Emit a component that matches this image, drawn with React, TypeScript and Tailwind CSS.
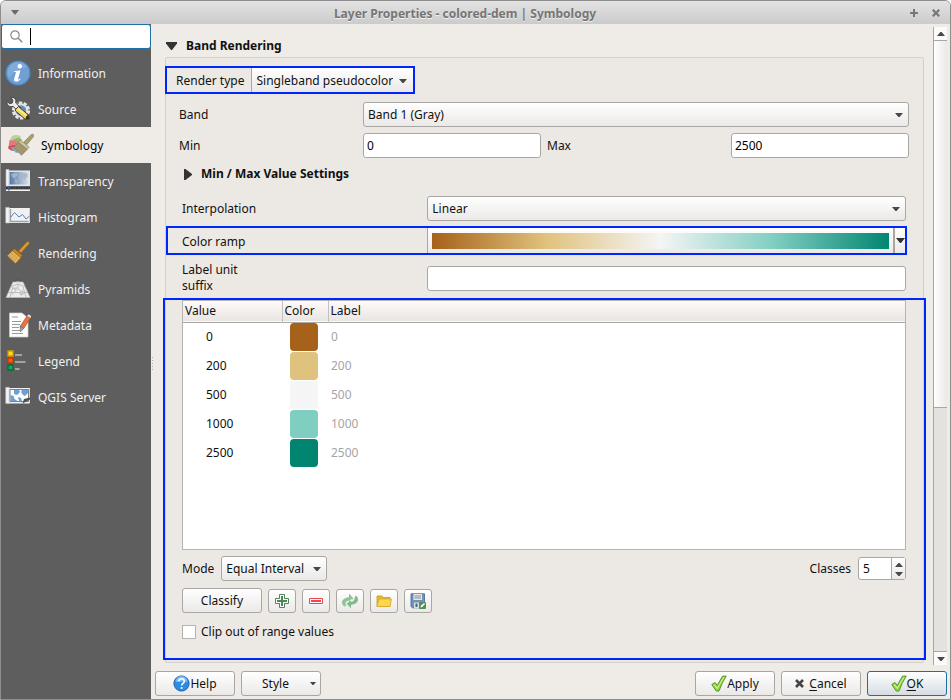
import React, { ReactNode, useState } from "react";

const raised = "border border-[#a9a7a4] rounded-[3px] bg-linear-to-b from-[#ffffff] to-[#ebe9e7]";
const field = "h-[25px] w-full min-w-0 rounded-[3px] border border-[#a9a7a4] bg-white px-[3px] text-[12px] leading-4 text-black outline-none";

function Down({ className = "" }: { className?: string }) {
  return (
    <svg width="8" height="4" viewBox="0 0 8 4" className={className} aria-hidden="true">
      <path d="M0 0h8L4.6 4H3.4z" fill="#484848" />
    </svg>
  );
}

function Up({ className = "" }: { className?: string }) {
  return (
    <svg width="8" height="4" viewBox="0 0 8 4" className={className} aria-hidden="true">
      <path d="M0 4h8L4.6 0H3.4z" fill="#484848" />
    </svg>
  );
}

function Combo({ id, label, options, flat = false }: { id: string; label?: string; options: string[]; flat?: boolean }) {
  return (
    <div className="relative min-w-0">
      <select
        id={id}
        aria-label={label}
        className={
          flat
            ? "block h-6 w-full appearance-none border-l border-[#a9a7a4] bg-linear-to-b from-[#ffffff] to-[#ebe9e7] pt-0.5 pr-5 pl-1 text-[12px] leading-4 outline-none"
            : `${raised} block h-[25px] w-full appearance-none pr-[22px] pl-1 text-[12px] leading-4 outline-none`
        }
      >
        {options.map((o) => (
          <option key={o}>{o}</option>
        ))}
      </select>
      <Down className="pointer-events-none absolute top-[11px] right-1.5" />
    </div>
  );
}

/* ---------- sidebar icons ---------- */

function InfoIcon() {
  return (
    <svg width="26" height="26" viewBox="0 0 26 26">
      <circle cx="13" cy="13" r="12" fill="#6f9fd3" stroke="#4a86c4" strokeWidth="1.2" />
      <path d="M2.5 12A10.5 10.5 0 0 1 22 7.500Q11 8 4 18Q2.500 15 2.500 12z" fill="#8fb5de" opacity=".55" />
      <circle cx="14.800" cy="6.300" r="2.200" fill="#fff" />
      <path d="M9 11.200l6.500-.9-2.400 8.500c-.2.900.5.900 1.800-.3l.7.600c-1.700 2-3.300 2.700-4.800 2.500-1.600-.2-2-1.300-1.600-2.800l1.700-6c.2-.7-.3-.8-1.900-.7z" fill="#fff" />
    </svg>
  );
}

function SourceIcon() {
  return (
    <svg width="26" height="26" viewBox="0 0 26 26">
      <circle cx="16" cy="14.500" r="7.800" fill="none" stroke="#e6e6e6" strokeWidth="2.600" strokeDasharray="3.400 1.500" />
      <circle cx="16" cy="14.500" r="6.200" fill="#5a8fca" stroke="#e2e2e2" strokeWidth="2" />
      <path d="M6 1.500c3.500-.6 5.500 2 4.700 5.500l5.300 5-2.800 3-5.200-4.700C4.500 11.500 1.500 9 2 5.500l2.700 2.300 2.600-.8.600-2.700z" fill="#eeeeec" stroke="#3f3f3f" strokeWidth=".9" />
      <path d="M10.500 13.500l3-3 9.500 8 1.200 4.500-4.200.2-9.500-8.200z" fill="#f0d160" stroke="#353019" strokeWidth=".9" />
      <path d="M12.800 12.500l8.700 7.500" stroke="#fff0a0" strokeWidth="1.300" />
      <path d="M20.500 23l.8-3 2-1 1 4z" fill="#3a3420" />
    </svg>
  );
}

function SymbologyIcon() {
  return (
    <svg width="26" height="26" viewBox="0 0 26 26">
      <path d="M3.500 4.500Q7.500 1.800 13 4.200L10.500 10 2 8.500z" fill="#bcd29a" />
      <path d="M5 7.500l5.500-2 3.500 2-3 6-5-1z" fill="#93b76c" />
      <path d="M1.500 8l7.500 1 .5 6-9 .5z" fill="#e8757c" />
      <path d="M.3 14.500l6-1.500 3 5Q4 20.500.3 16.500z" fill="#d04a52" />
      <path d="M2.500 15.500l6-1 4 5.500-4.500 1z" fill="#88a8d8" />
      <path d="M15.500 10.500l7.300-7.500q1.500-1.300 2.700-.3.800 1-.3 2.200L18.500 13z" fill="#aaa070" stroke="#7d754f" strokeWidth=".6" />
      <path d="M12.500 8l8.700 7-2 2.500-8.700-7z" fill="#c9c2a4" stroke="#8b8460" strokeWidth=".6" />
      <path d="M10.500 10.500l8.700 7-5.700 5.700-7.700-7.500z" fill="#a79b70" stroke="#7c7150" strokeWidth=".6" />
      <path d="M12 12.500l-4 4.200M14 14l-4 4.700M16 15.500l-4 5M18 17.300l-4.500 4.700" stroke="#8a7f5a" strokeWidth=".6" />
    </svg>
  );
}

function TransparencyIcon() {
  return (
    <svg width="26" height="26" viewBox="0 0 26 26">
      <defs>
        <linearGradient id="sky" x1="0" x2="1">
          <stop offset="0" stopColor="#5578a8" />
          <stop offset="1" stopColor="#d5e0ee" />
        </linearGradient>
      </defs>
      <path d="M4 2.500h21V18H3.500z" fill="#e4e7ea" />
      <path d="M4.500 4h19v12.500H4.500z" fill="url(#sky)" />
      <path d="M6 6l5-1 2 1.500-2 2-1 2-3-1.500zM10 11l2.500 1-1 4-1.500-2zM15 6l7-.5 1 3-2 1-1 3-2-3-1 5-2-4-1-1z" fill="#a9b7c6" opacity=".9" />
      <path d="M1 1.500h3v16.500H1z" fill="#f2f2f2" stroke="#bcbcbc" strokeWidth=".6" />
      <path d="M1 20h24" stroke="#34383c" strokeWidth="2" strokeDasharray="2 .5" />
      <path d="M1 22.300h24" stroke="#f5f5f5" strokeWidth="1.500" />
      <path d="M4 18.500v4" stroke="#2e5fa0" strokeWidth="1.500" />
    </svg>
  );
}

function HistogramIcon() {
  return (
    <svg width="26" height="26" viewBox="0 0 26 26">
      <path d="M4 4h20.800v15H4z" fill="#f1f1f1" />
      <path d="M.8 3.400h3.400v15.500H.8z" fill="#f5f5f5" stroke="#c4c4c4" strokeWidth=".7" />
      <path d="M5.500 5v12.500h18" stroke="#9aa3aa" fill="none" strokeWidth="1.300" />
      <path d="M5.500 13.500l4-5 4.500 4.500 3.500-2.500 3.500 4.500 3.500-3" stroke="#5b82b5" fill="none" strokeWidth="1" />
    </svg>
  );
}

function RenderingIcon() {
  return (
    <svg width="26" height="26" viewBox="0 0 26 26">
      <path d="M13.500 11l8.300-9q1.300-.9 2.300 0 .8 1-.2 2.200L16 13z" fill="#d99b38" stroke="#8d5f18" strokeWidth=".7" />
      <path d="M9.500 8.500l8 7-2 2.300-8.200-7z" fill="#cb872a" stroke="#805413" strokeWidth=".7" />
      <path d="M7.600 10.700l8.200 7L10.500 23.500 2.200 15.800z" fill="#e5b868" stroke="#9a6b22" strokeWidth=".8" />
      <path d="M9.500 12.300L4 17.500M11.500 14L6 19.500M13.500 15.700l-5.500 5.800M5.500 12.800l8 7M4 15l7.500 7" stroke="#bd8b3b" strokeWidth=".5" />
    </svg>
  );
}

function PyramidsIcon() {
  return (
    <svg width="26" height="26" viewBox="0 0 26 26">
      <path d="M9.500 7q0-3 3.500-3t3.500 3z" fill="#8c8c8c" stroke="#3b3b3b" strokeWidth=".7" />
      <path d="M8 6h10l7 15.500H1z" fill="#ececec" stroke="#b9b9b9" strokeWidth=".7" />
      <path d="M5.500 11L13 8l7.500 3M3 16.500h19M8 11L5 21M18 11l3 10M7 12l4 2-2 3M13 8v5l4 3" stroke="#b0b0b0" fill="none" strokeWidth=".8" />
      <path d="M8.500 12l3-1 1 2-2 2zM14 17l4-3 1 4-3 2zM5 18l3-1 1 2z" fill="#c9c9c9" />
    </svg>
  );
}

function MetadataIcon() {
  return (
    <svg width="26" height="26" viewBox="0 0 26 26">
      <path d="M4.500 1h12.500l6 5v19H4.500z" fill="#fcfcfc" stroke="#cfcfcf" strokeWidth=".7" />
      <path d="M7 5h6M7 9.500h9M7 12.500h8M7 15.500h7M7 18.500h8M7 21.500h11" stroke="#9a9a9a" strokeWidth="1" />
      <path d="M22 4l3.500 2-6.800 10.500-3.600-2.200z" fill="#e57440" stroke="#aa4b20" strokeWidth=".6" />
      <path d="M22 4l1.200-1.500q2-.2 3 2L25.500 6z" fill="#e4dcd8" />
      <path d="M15.100 14.300l3.600 2.200-3.200 3.300z" fill="#8fa0a8" stroke="#59656b" strokeWidth=".6" />
    </svg>
  );
}

function LegendIcon() {
  return (
    <svg width="26" height="26" viewBox="0 0 26 26">
      <path d="M3 3h5v5H3z" fill="#ffdc22" stroke="#e09a00" strokeWidth="1.300" />
      <path d="M3 10h5v5H3z" fill="#ff5a0a" stroke="#c83600" strokeWidth="1.300" />
      <path d="M3 17h5v5H3z" fill="#18a558" stroke="#0a6b3e" strokeWidth="1.300" />
      <path d="M10 7h7M10 14h10.500M10 21h4.500" stroke="#a3a3a3" strokeWidth="1.800" />
    </svg>
  );
}

function ServerIcon() {
  return (
    <svg width="26" height="26" viewBox="0 0 26 26">
      <path d="M4 4h20.800v15.500H3.500z" fill="#f2f2f2" />
      <path d="M.8 3.400h3.400v16H.8z" fill="#f5f5f5" stroke="#c4c4c4" strokeWidth=".7" />
      <path d="M5 5.500h18.500v12H5z" fill="#fdfdfd" stroke="#6f7478" strokeWidth=".9" />
      <path d="M9 6h5l1 2-3 3-3-1zM17 6h6v3l-3 3-2-1-2-3zM5.500 11l3 1 1 3 3 2h-7zM13 13l3 1 1 3h-3z" fill="#6d9fd4" />
      <path d="M17.500 19.500l1.500-4.500 6-1.500v2z" fill="#4d4d4d" />
    </svg>
  );
}

const pages: { name: string; icon: ReactNode }[] = [
  { name: "Information", icon: <InfoIcon /> },
  { name: "Source", icon: <SourceIcon /> },
  { name: "Symbology", icon: <SymbologyIcon /> },
  { name: "Transparency", icon: <TransparencyIcon /> },
  { name: "Histogram", icon: <HistogramIcon /> },
  { name: "Rendering", icon: <RenderingIcon /> },
  { name: "Pyramids", icon: <PyramidsIcon /> },
  { name: "Metadata", icon: <MetadataIcon /> },
  { name: "Legend", icon: <LegendIcon /> },
  { name: "QGIS Server", icon: <ServerIcon /> },
];

/* ---------- toolbar icons ---------- */

const AddIcon = (
  <svg width="16" height="16" viewBox="0 0 16 16">
    <path d="M5.500 1.500h5v4h4v5h-4v4h-5v-4h-4v-5h4z" fill="#fff" stroke="#4d8757" />
    <path d="M7 3h2v4h4v2H9v4H7V9H3V7h4z" fill="#4d8757" />
  </svg>
);
const RemoveIcon = (
  <svg width="16" height="16" viewBox="0 0 16 16">
    <path d="M1.500 5.500h13v5h-13z" fill="#fff" stroke="#ec4a50" />
    <path d="M3 7h10v2H3z" fill="#ec4a50" />
  </svg>
);
const RefreshIcon = (
  <svg width="18" height="18" viewBox="0 0 18 18">
    <path d="M3.500 14.500Q.5 12.500 1 9.500 2 6 8 5V1.500L12.500 6.500 8 11V8.500Q4.500 9 4.500 11.500 4.500 12.500 5.500 13.500z" fill="#8fc497" />
    <path d="M14.500 3.500Q17.500 5.500 17 8.500 16 12 10 13v3.500L5.500 11.500 10 8.500v1.500Q13.500 9 13.500 6.500z" fill="#83ba8c" />
    <path d="M8.500 8.500l3-2 -1 3z" fill="#f1f0ee" />
  </svg>
);
const FolderIcon = (
  <svg width="16" height="16" viewBox="0 0 16 16">
    <path d="M1 13.500V3h5l1 1.500h7V13.500z" fill="#e5b92f" stroke="#c69b22" strokeWidth=".8" />
    <path d="M3 6h12.500l-1.500 7.500H1z" fill="#fcd651" stroke="#d8aa2a" strokeWidth=".8" />
  </svg>
);
const SaveIcon = (
  <svg width="16" height="16" viewBox="0 0 16 16">
    <path d="M1 .8h13.500v14H2.500L1 13.500z" fill="#6d93be" stroke="#4e7095" strokeWidth=".9" />
    <path d="M3.500 1h8.500v6H3.500z" fill="#e6e6e6" />
    <path d="M4.500 3h6.500M4.500 5h6.500" stroke="#8d8d8d" />
    <path d="M4 9.500h8V15H4z" fill="#dedede" />
    <path d="M5.500 10.500h2V14h-2z" fill="#4a6485" />
    <rect x="9" y="9" width="7" height="7" rx="1" fill="#4f9057" />
    <path d="M10.500 14.500l.5-2 3-2.500 1 1-2.700 3z" fill="#fff" />
  </svg>
);

function Check() {
  return (
    <svg width="16" height="17" viewBox="0 0 16 17" aria-hidden="true">
      <path d="M.8 9.500l3.200-2L6.200 10.500 11.500 1.200 15.200 1Q10.800 8 8 16H5.200z" fill="#8fd33f" stroke="#4c8f22" strokeWidth=".9" strokeLinejoin="round" />
      <path d="M2.800 9.500l3.500 3.700L13 2.300" stroke="#c6f08a" fill="none" strokeWidth="1.200" />
    </svg>
  );
}

const stops = [
  { value: "0", swatch: "bg-[#a6611a]" },
  { value: "200", swatch: "bg-[#dfc27d]" },
  { value: "500", swatch: "bg-[#f5f5f5]" },
  { value: "1000", swatch: "bg-[#80cdc1]" },
  { value: "2500", swatch: "bg-[#018571]" },
];

const tools = [
  { name: "Add value", icon: AddIcon },
  { name: "Remove value", icon: RemoveIcon },
  { name: "Reload from band", icon: RefreshIcon },
  { name: "Load color map", icon: FolderIcon },
  { name: "Save color map", icon: SaveIcon },
];

const dialogButton = `${raised} flex h-[25px] w-20 items-center justify-center`;

function TitleBar() {
  return (
    <header className="flex h-[23px] items-center bg-linear-to-b from-[#e3e3e3] to-[#cbcbcb] pr-[10px] pl-[9px]">
      <button aria-label="Window menu" className="w-[10px]">
        <svg width="8" height="5" viewBox="0 0 8 5" className="mx-auto"><path d="M0 0h8L4.500 4.500h-1z" fill="#6a6a6a" /></svg>
      </button>
      <h1 className="flex-1 pt-0.5 text-center text-[12px] leading-4 font-bold text-[#757575] [text-shadow:0_1px_0_#f0f0f0]">
        Layer Properties - colored-dem | Symbology
      </h1>
      <div className="flex gap-[14px]">
        <button aria-label="Maximize">
          <svg width="8" height="8" viewBox="0 0 8 8"><path d="M4 0v8M0 4h8" stroke="#777" strokeWidth="2" /></svg>
        </button>
        <button aria-label="Close">
          <svg width="8" height="8" viewBox="0 0 8 8"><path d="M.7.7l6.600 6.600M7.300.7L.7 7.300" stroke="#777" strokeWidth="2.200" /></svg>
        </button>
      </div>
    </header>
  );
}

function Sidebar() {
  const [page, setPage] = useState("Symbology");
  return (
    <aside className="w-[150px] shrink-0 bg-[#5e5e5e]">
      <div className="flex h-[25px] items-center rounded-[3px] border border-[#1c72a8] bg-white pl-2">
        <svg width="13" height="13" viewBox="0 0 13 13" aria-hidden="true">
          <circle cx="5" cy="5" r="4.200" fill="none" stroke="#8b8b8b" strokeWidth="1.200" />
          <path d="M8.200 8.200L12.300 12.300" stroke="#8b8b8b" strokeWidth="1.600" />
        </svg>
        <div className="ml-[7px] h-[17px] w-px bg-black" />
        <input aria-label="Search" className="h-full w-full min-w-0 flex-1 bg-transparent text-[12px] outline-none" />
      </div>
      <nav className="mt-1.5 flex flex-col">
        {pages.map(({ name, icon }) => (
          <button
            key={name}
            onClick={() => setPage(name)}
            aria-current={page === name}
            className={
              page === name
                ? "flex h-9 items-center gap-[7px] bg-[#efebe7] pl-[7px] text-black"
                : "flex h-9 items-center gap-[7px] pl-1 text-[#f0f0f0]"
            }
          >
            {icon}
            <span className="pt-0.5">{name}</span>
          </button>
        ))}
      </nav>
    </aside>
  );
}

function ColorTable() {
  return (
    <div className="min-h-[180px] flex-1 border border-[#b5b3b0] bg-white">
      <table className="w-full table-fixed border-collapse text-left">
        <thead>
          <tr className="h-[21px] border-b border-[#a9a7a4] bg-linear-to-b from-[#fdfaf8] to-[#e8e6e3]">
            <th className="w-[99px] border-r border-[#c3c1be] pl-0.5 font-normal">Value</th>
            <th className="w-[46px] border-r border-[#c3c1be] pl-0.5 font-normal">Color</th>
            <th className="pl-0.5 font-normal">Label</th>
          </tr>
        </thead>
        <tbody>
          {stops.map((s) => (
            <tr key={s.value} className="h-[29px]">
              <td className="p-0 pl-[23px]">{s.value}</td>
              <td className="p-0 pl-2"><div className={`size-7 rounded-[4px] ${s.swatch}`} /></td>
              <td className="p-0 pl-[3px] text-[#a5a5a5]">{s.value}</td>
            </tr>
          ))}
        </tbody>
      </table>
    </div>
  );
}

function BandRendering() {
  return (
    <section className="flex min-w-0 flex-1 flex-col pb-1">
      <h2 className="flex h-[33px] items-center gap-[9px] pt-[10px] pl-px font-bold">
        <svg width="11" height="8" viewBox="0 0 11 8" aria-hidden="true"><path d="M0 0h11v1.500L6 8H5L0 1.500z" fill="#333" /></svg>
        Band Rendering
      </h2>
      <div className="flex flex-1 flex-col rounded-[2px] border border-[#d3d0cc] bg-[#ece9e4] pt-2 pb-[2px]">
        <div className="-ml-px flex h-7 items-center self-start border-2 border-[#0026ff] pl-[9px]">
          <label htmlFor="render" className="mr-[7px] pt-0.5">Render type</label>
          <Combo id="render" flat options={["Singleband pseudocolor"]} />
        </div>

        <div className="mt-2 grid grid-cols-4 items-center gap-x-1.5 gap-y-1.5 pr-[14px] pl-[13px]">
          <label htmlFor="band">Band</label>
          <div className="col-span-3"><Combo id="band" options={["Band 1 (Gray)"]} /></div>
          <label htmlFor="min">Min</label>
          <input id="min" className={field} defaultValue="0" />
          <label htmlFor="max">Max</label>
          <input id="max" className={field} defaultValue="2500" />
        </div>

        <button className="mt-1.5 flex h-5 items-center gap-[9px] self-start pl-[18px] font-bold">
          <svg width="8" height="11" viewBox="0 0 8 11" aria-hidden="true"><path d="M0 0h1.500L8 5v1L1.500 11H0z" fill="#333" /></svg>
          Min / Max Value Settings
        </button>

        <div className="mt-3 mr-[17px] ml-4 grid grid-cols-[1fr_2fr] items-center gap-x-1.5">
          <label htmlFor="interp">Interpolation</label>
          <Combo id="interp" options={["Linear"]} />
        </div>

        <div className="mt-[5px] mr-4 grid h-[29px] grid-cols-[1fr_2fr] items-center gap-x-1.5 border-2 border-[#0026ff] pl-[14px]">
          <span className="pt-0.5">Color ramp</span>
          <div className="flex h-[25px]">
            <button
              aria-label="Edit color ramp"
              className="flex flex-1 items-center border-l border-[#a9a7a4] bg-linear-to-b from-[#ffffff] to-[#ebe9e7] px-1"
            >
              <span className="h-4 flex-1 bg-[linear-gradient(to_right,#a6611a,#dfc27d,#f5f5f5,#80cdc1,#018571)]" />
            </button>
            <button
              aria-label="Color ramp menu"
              className="flex w-3 items-center justify-center border-l-2 border-[#a9a7a4] bg-linear-to-b from-[#ffffff] to-[#ebe9e7]"
            >
              <svg width="9" height="5" viewBox="0 0 9 5" aria-hidden="true"><path d="M0 0h9L5 5H4z" fill="#333" /></svg>
            </button>
          </div>
        </div>

        <div className="mt-[7px] mr-[17px] ml-4 grid grid-cols-[1fr_2fr] items-center gap-x-1.5">
          <label htmlFor="suffix">Label unit<br />suffix</label>
          <input id="suffix" className={field} />
        </div>

        <div className="-mx-[3px] mt-1 flex flex-1 flex-col border-2 border-[#0026ff] pr-[18px] pb-[18px] pl-[17px]">
          <ColorTable />

          <div className="mt-1.5 flex items-center justify-between">
            <div className="flex items-center gap-[7px]">
              <label htmlFor="mode">Mode</label>
              <Combo id="mode" options={["Equal Interval"]} />
            </div>
            <div className="flex items-center gap-[7px]">
              <label htmlFor="classes">Classes</label>
              <div className="flex h-[23px] w-12 rounded-[3px] border border-[#a9a7a4] bg-white">
                <input id="classes" defaultValue="5" className="w-8 min-w-0 flex-1 pl-1 text-[12px] leading-4 outline-none" />
                <div className="flex w-[14px] flex-col border-l border-[#a9a7a4] bg-linear-to-b from-[#ffffff] to-[#ebe9e7]">
                  <button aria-label="More classes" className="flex flex-1 items-center justify-center pt-0.5"><Up /></button>
                  <button aria-label="Fewer classes" className="flex flex-1 items-center justify-center"><Down /></button>
                </div>
              </div>
            </div>
          </div>

          <div className="mt-[7px] flex items-end gap-1.5">
            <button className={dialogButton}>Classify</button>
            {tools.map((t) => (
              <button key={t.name} aria-label={t.name} className={`${raised} flex h-6 w-7 items-center justify-center`}>
                {t.icon}
              </button>
            ))}
          </div>

          <label className="mt-[11px] flex h-4 items-center gap-[5px]">
            <input type="checkbox" className="size-[14px] appearance-none border border-[#b5b3b0] bg-white" />
            Clip out of range values
          </label>
        </div>
      </div>
    </section>
  );
}

function ScrollBar() {
  return (
    <div className="mt-[3px] mr-[3px] mb-[2px] ml-[9px] flex w-[14px] flex-col border-l border-[#a9a7a4] bg-[#e3e2df]">
      <button aria-label="Scroll up" className="flex h-[14px] items-center justify-center border-b border-[#a9a7a4] bg-[#fafafa]"><Up /></button>
      <div className="flex-[367] border-b border-[#a9a7a4] bg-linear-to-r from-[#ffffff] to-[#ebe9e7]" />
      <div className="flex-[243]" />
      <button aria-label="Scroll down" className="flex h-[14px] items-center justify-center border-t border-[#a9a7a4] bg-[#fafafa]"><Down /></button>
    </div>
  );
}

export default function App() {
  return (
    <div className="min-h-screen bg-white">
      <div className="flex min-h-screen flex-col overflow-hidden rounded-t-[6px] border border-[#8e8e8e] bg-[#efebe7] font-['Noto_Sans',sans-serif] text-[12px] leading-4 text-[#111]">
        <TitleBar />
        <div className="flex flex-1">
          <Sidebar />
          <main className="flex min-w-0 flex-1 flex-col">
            <div className="flex flex-1">
              <div className="flex w-[14px] shrink-0 items-center">
                <div className="mt-[36px] h-4 w-[3px] bg-[radial-gradient(#b5b2ae_1px,transparent_1px)] bg-[size:3px_3px]" />
              </div>
              <BandRendering />
              <ScrollBar />
            </div>
            <footer className="flex gap-1.5 pt-1 pr-[3px] pb-[3px] pl-1">
              <button className={dialogButton}>
                <svg width="17" height="17" viewBox="0 0 17 17" aria-hidden="true">
                  <circle cx="8.500" cy="8.500" r="7.600" fill="#2f8be0" stroke="#1c5fa8" />
                  <path d="M2.500 7a6 6 0 0 1 12 0Q8 6 2.500 7z" fill="#7dbdf2" />
                  <path d="M5.800 6.400Q6 3.800 8.600 3.800T11.300 6.200Q11.300 7.600 9.800 8.500 8.600 9.200 8.600 10.600" fill="none" stroke="#fff" strokeWidth="1.500" />
                  <circle cx="8.600" cy="13" r="1" fill="#fff" />
                </svg>
                Help
              </button>
              <button className={`${raised} flex h-[25px] w-20 items-center pr-1 pl-5`}>
                <span className="flex-1 text-left">Style</span>
                <svg width="6" height="3" viewBox="0 0 6 3" aria-hidden="true"><path d="M0 0h6L3.500 3h-1z" fill="#444" /></svg>
              </button>
              <div className="flex-1" />
              <button className={dialogButton}><Check />Apply</button>
              <button className={dialogButton}>
                <svg width="9" height="9" viewBox="0 0 9 9" className="mr-[5px]" aria-hidden="true"><path d="M1 1l7 7M8 1L1 8" stroke="#444" strokeWidth="2.600" /></svg>
                <span><span className="underline underline-offset-2">C</span>ancel</span>
              </button>
              <button className="flex h-[25px] w-20 items-center justify-center rounded-[3px] border border-[#1c6ea4] bg-linear-to-b from-[#ffffff] to-[#d5dde3]">
                <Check /><span><span className="underline underline-offset-2">O</span>K</span>
              </button>
            </footer>
          </main>
        </div>
      </div>
    </div>
  );
}
